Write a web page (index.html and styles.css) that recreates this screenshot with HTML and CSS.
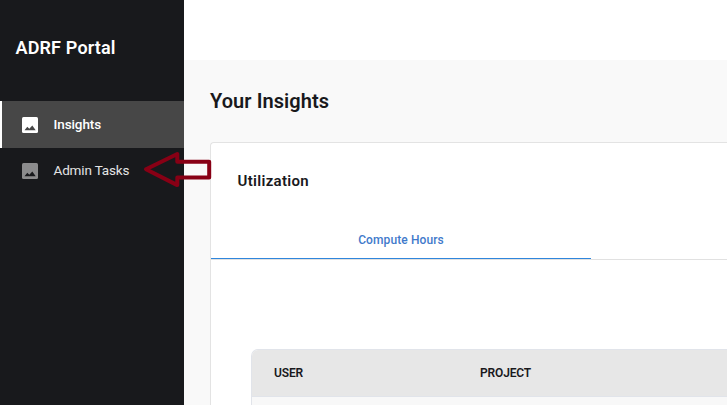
FILE: index.html
```html
<!DOCTYPE html>
<html lang="en">
<head>
<meta charset="utf-8">
<title>ADRF Portal</title>
<link rel="stylesheet" href="styles.css">
</head>
<body>
<div class="app">
  <aside class="sidebar">
    <div class="brand"><span>ADRF Portal</span></div>
    <nav class="menu">
      <a class="item active">
        <svg class="icon" viewBox="0 0 16 16"><rect width="16" height="16" rx="1.5" fill="#fff"/><path d="M2.500 13.300l2.800-3.500 2 2L10.300 8.500l3.400 4.800z" fill="#474747"/></svg>
        <span class="label">Insights</span>
      </a>
      <a class="item">
        <svg class="icon" viewBox="0 0 16 16"><rect width="16" height="16" rx="1.5" fill="#8c8c8d"/><path d="M2.500 13.300l2.800-3.500 2 2L10.300 8.500l3.400 4.800z" fill="#18191c"/></svg>
        <span class="label">Admin Tasks</span>
        <svg class="pointer" viewBox="0 0 70 38"><path d="M4 19.200L35.300 4v7.800h31.900v15.700H35.300v7.600z"/></svg>
      </a>
    </nav>
  </aside>
  <div class="main">
    <header class="topbar"></header>
    <main class="content">
      <h1 class="title"><span>Your Insights</span></h1>
      <section class="card">
        <h2 class="heading"><span>Utilization</span></h2>
        <div class="tabs"><div class="tab"><span>Compute Hours</span></div></div>
        <div class="table">
          <div class="row head"><span class="cell"><span>USER</span></span><span class="cell"><span>PROJECT</span></span></div>
          <div class="row body"></div>
        </div>
      </section>
    </main>
  </div>
</div>
</body>
</html>
```
FILE: styles.css
```css
* { box-sizing: border-box; }
body {
  margin: 0;
  height: 405px;
  overflow: hidden;
  font-family: Roboto, "Liberation Sans", sans-serif;
  color: #19191d;
}
.app { display: flex; height: 405px; }
.sidebar { width: 184px; flex: none; background: #18191c; color: #fff; }
.brand {
  height: 101px;
  padding: 36px 0 0 15.5px;
  font-size: 18px;
  line-height: 24px;
  font-weight: 600;
  letter-spacing: 0.15px;
}
.item {
  position: relative;
  display: flex;
  align-items: center;
  height: 45px;
  padding-left: 22px;
  font-size: 13.5px;
  letter-spacing: -0.15px;
  color: #e4e4e4;
}
.item.active {
  height: 47px;
  padding-left: 20px;
  border-left: 2px solid #fff;
  background: #474747;
  color: #fff;
  font-weight: 500;
  letter-spacing: -0.1px;
}
.icon { width: 16px; height: 16px; margin-right: 15.5px; flex: none; }
.label { padding-bottom: 2px; }
.pointer {
  position: absolute;
  left: 142px;
  top: 2px;
  width: 70px;
  height: 38px;
  z-index: 1;
  fill: none;
  stroke: #880015;
  stroke-width: 4;
  stroke-linejoin: round;
}
.main { flex: 1; min-width: 0; background: #f9f9f9; }
.topbar { height: 60px; background: #fff; }
.content { padding-left: 26px; }
.title {
  margin: 0;
  height: 82px;
  padding-top: 28px;
  font-size: 20px;
  line-height: 26px;
  font-weight: 600;
  letter-spacing: 0.07px;
}
.card {
  height: 263px;
  border: 1px solid #e3e3e3;
  border-right: 0;
  border-bottom: 0;
  border-top-left-radius: 4px;
  background: #fff;
}
.heading {
  margin: 0;
  height: 77px;
  padding: 28px 0 0 26.5px;
  font-size: 15px;
  line-height: 20px;
  font-weight: 600;
  letter-spacing: 0.32px;
}
.tabs { height: 40px; border-bottom: 1px solid #e1e1e1; }
.tab {
  width: 380px;
  height: 39px;
  padding-top: 12px;
  border-bottom: 1px solid #2f86dc;
  text-align: center;
  font-size: 12px;
  line-height: 16px;
  font-weight: 500;
  letter-spacing: 0.1px;
  color: #3f7acb;
}
.table {
  margin: 89px 0 0 40px;
  border: 1px solid #e1e4ea;
  border-right: 0;
  border-bottom: 0;
  border-top-left-radius: 7px;
  overflow: hidden;
}
.row.head {
  display: grid;
  grid-template-columns: 206px 1fr;
  align-items: center;
  height: 47px;
  padding-left: 22px;
  background: #e7e7e7;
  border-bottom: 1px solid #e1e4ea;
  font-size: 12px;
  font-weight: 600;
  letter-spacing: -0.15px;
}
.row.body { height: 8px; background: #f8f8f8; }
```
